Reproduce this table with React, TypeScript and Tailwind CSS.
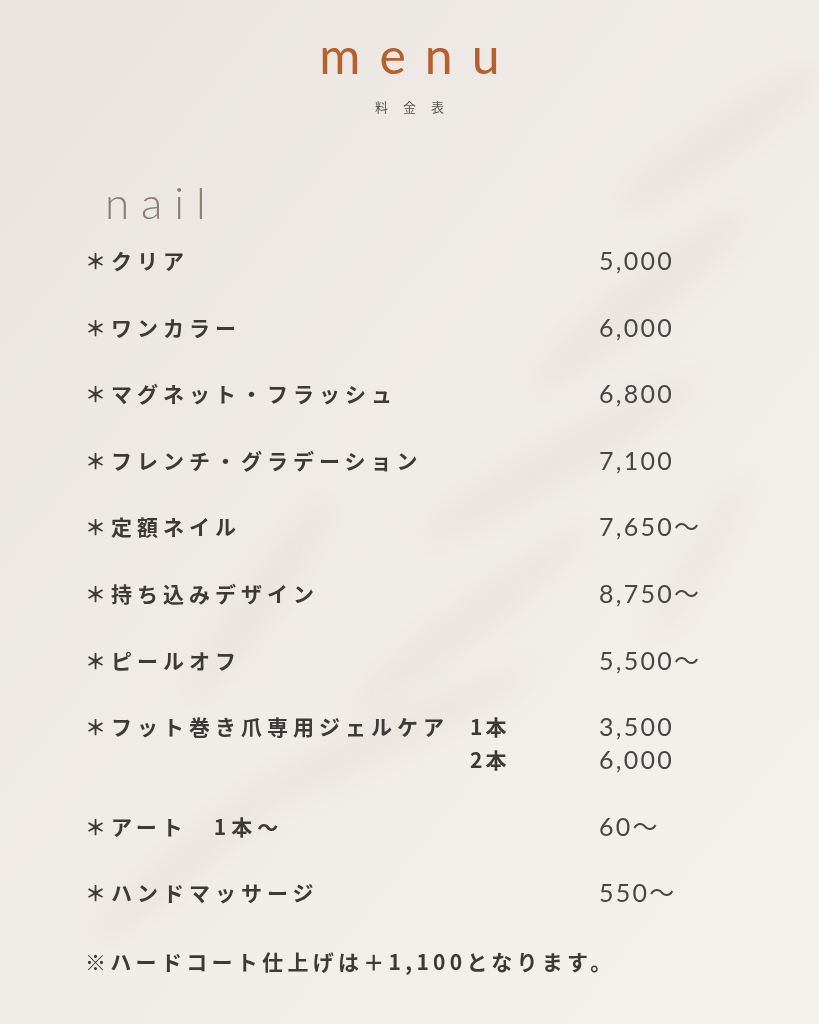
import React from "react";

type Item = {
  name: string;
  lines: { unit?: string; price: string }[];
};

const items: Item[] = [
  { name: "＊クリア", lines: [{ price: "5,000" }] },
  { name: "＊ワンカラー", lines: [{ price: "6,000" }] },
  { name: "＊マグネット・フラッシュ", lines: [{ price: "6,800" }] },
  { name: "＊フレンチ・グラデーション", lines: [{ price: "7,100" }] },
  { name: "＊定額ネイル", lines: [{ price: "7,650～" }] },
  { name: "＊持ち込みデザイン", lines: [{ price: "8,750～" }] },
  { name: "＊ピールオフ", lines: [{ price: "5,500～" }] },
  {
    name: "＊フット巻き爪専用ジェルケア",
    lines: [
      { unit: "1本", price: "3,500" },
      { unit: "2本", price: "6,000" },
    ],
  },
  { name: "＊アート　1本～", lines: [{ price: "60～" }] },
  { name: "＊ハンドマッサージ", lines: [{ price: "550～" }] },
];

const jp = "font-['Noto_Sans_CJK_JP','Noto_Sans',sans-serif]";
const latin = "font-['Lato','Noto_Sans_CJK_JP',sans-serif]";

// soft leaf shadows behind the menu
const Shadows = () => (
  <svg
    className="absolute inset-0 w-full h-full pointer-events-none"
    viewBox="0 0 819 1024"
    preserveAspectRatio="none"
  >
    <defs>
      <filter id="blur" x="-50%" y="-50%" width="200%" height="200%">
        <feGaussianBlur stdDeviation="12" />
      </filter>
    </defs>
    <g filter="url(#blur)" fill="#ddd6cf" opacity="0.3">
      <ellipse cx="720" cy="140" rx="120" ry="22" transform="rotate(-35 720 140)" />
      <ellipse cx="640" cy="300" rx="140" ry="24" transform="rotate(-40 640 300)" />
      <ellipse cx="560" cy="460" rx="160" ry="24" transform="rotate(-30 560 460)" />
      <ellipse cx="470" cy="620" rx="150" ry="22" transform="rotate(-38 470 620)" />
      <ellipse cx="260" cy="600" rx="120" ry="18" transform="rotate(-55 260 600)" />
      <ellipse cx="380" cy="740" rx="170" ry="20" transform="rotate(-25 380 740)" />
      <ellipse cx="200" cy="850" rx="140" ry="18" transform="rotate(-40 200 850)" />
      <ellipse cx="700" cy="560" rx="90" ry="16" transform="rotate(-60 700 560)" />
    </g>
  </svg>
);

export default function App() {
  return (
    <div className="relative w-[819px] h-[1024px] overflow-hidden bg-gradient-to-br from-[#e9e4df] via-[#f0ece7] to-[#f5f2ee]">
      <Shadows />
      <div className="relative flex flex-col">
        <header className="flex flex-col items-center pt-[24px]">
          <h1
            className={`${latin} text-[50px] leading-[62px] tracking-[19px] pl-[19px] text-[#b95f2c]`}
          >
            menu
          </h1>
          <p
            className={`${jp} text-[13px] leading-[20px] tracking-[15px] pl-[15px] text-[#555] mt-[11px]`}
          >
            料金表
          </p>
        </header>

        <h2
          className={`${latin} font-light text-[44px] leading-[52px] tracking-[0.27em] text-[#8a7d72] ml-[105px] mt-[59px]`}
        >
          nail
        </h2>

        <ul className="flex flex-col gap-[33.6px] ml-[85px] mt-[16px]">
          {items.map((item) => (
            <li
              key={item.name}
              className="grid grid-cols-[385px_129px_1fr] text-[#3c3a38]"
            >
              <span
                className={`${jp} font-bold text-[21px] leading-[33px] tracking-[5px]`}
              >
                {item.name}
              </span>
              <div className="flex flex-col">
                {item.lines.map((l, i) => (
                  <span
                    key={i}
                    className={`${jp} font-bold text-[21px] leading-[33px] tracking-[3px]`}
                  >
                    {l.unit ?? ""}
                  </span>
                ))}
              </div>
              <div className="flex flex-col">
                {item.lines.map((l, i) => (
                  <span
                    key={i}
                    className={`${latin} text-[25px] leading-[33px] tracking-[0.09em] text-[#464646]`}
                  >
                    {l.price}
                  </span>
                ))}
              </div>
            </li>
          ))}
        </ul>

        <p
          className={`${jp} font-bold text-[21px] leading-[33px] tracking-[4.3px] text-[#3c3a38] ml-[85px] mt-[36px]`}
        >
          ※ハードコート仕上げは＋1,100となります。
        </p>
      </div>
    </div>
  );
}
